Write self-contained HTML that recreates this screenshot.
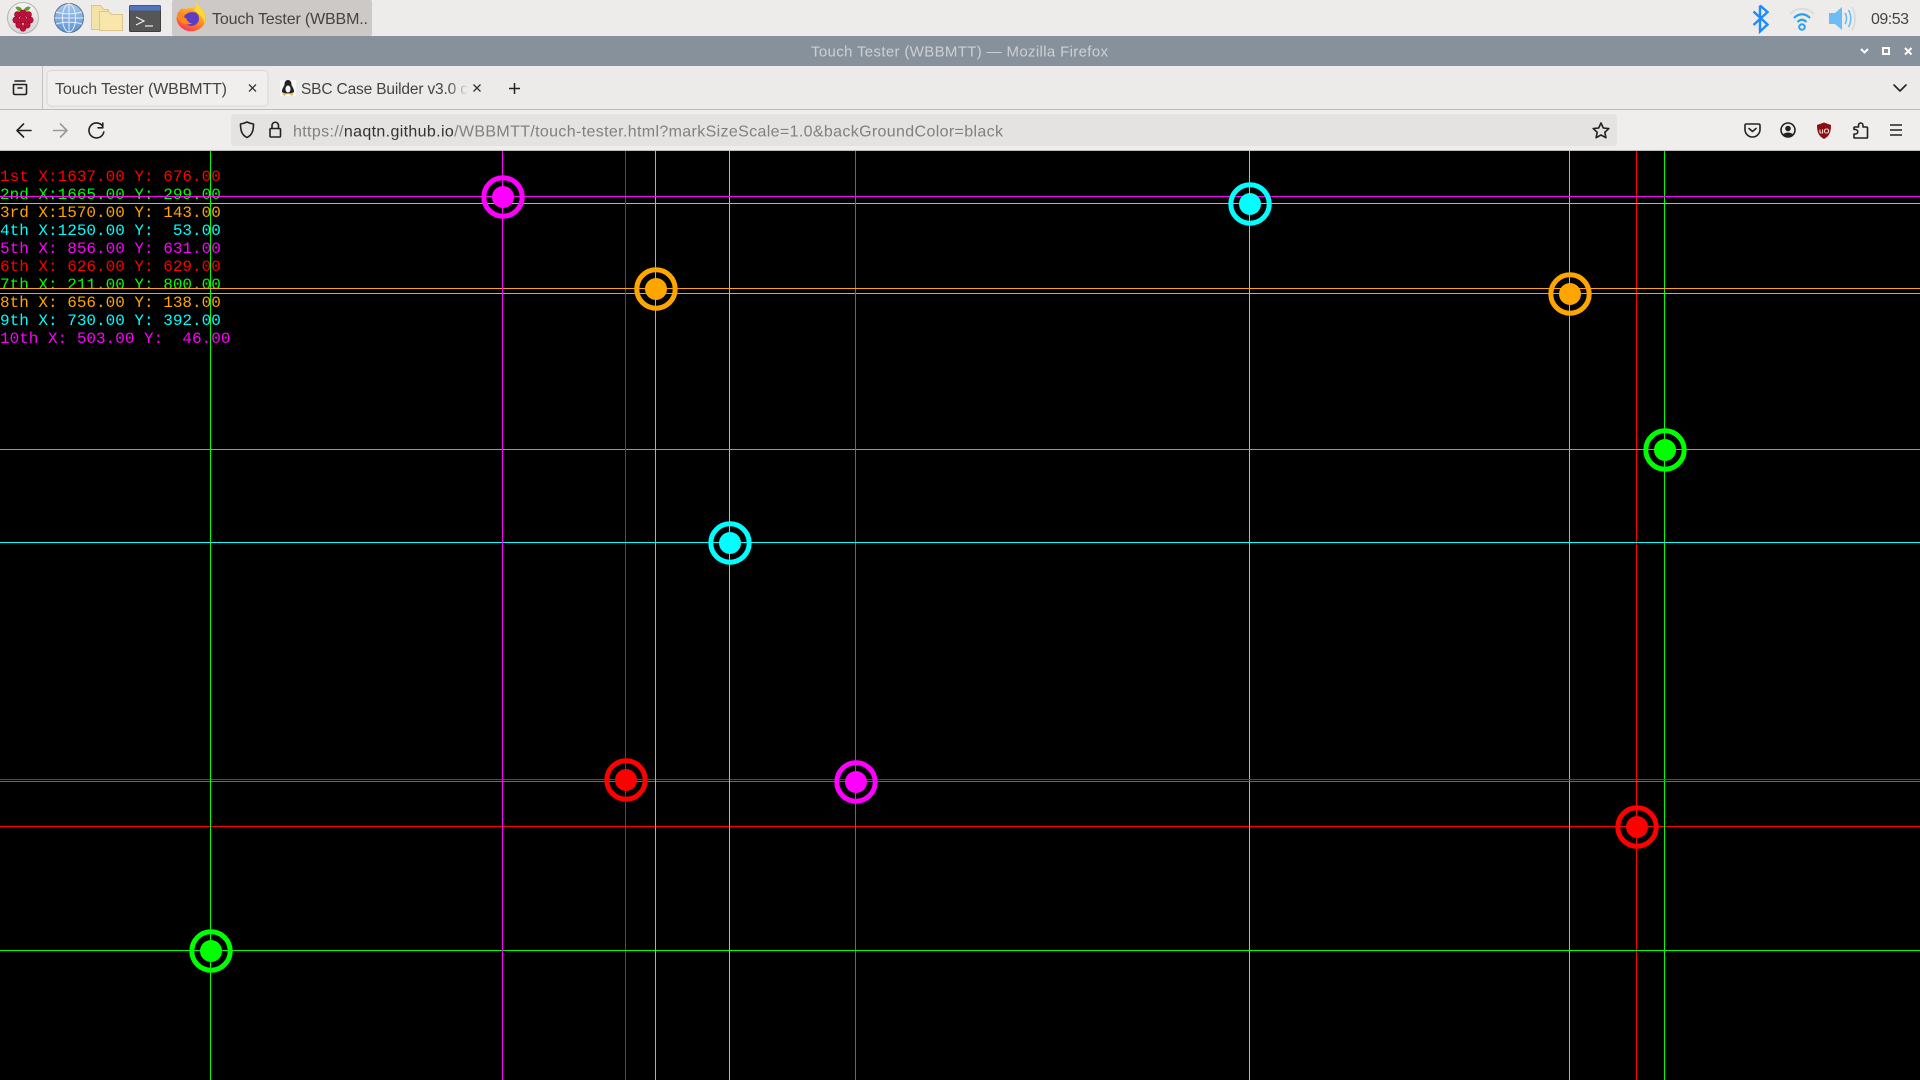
<!DOCTYPE html>
<html><head><meta charset="utf-8"><title>Touch Tester (WBBMTT)</title>
<style>html,body{margin:0;padding:0;background:#000;width:1920px;height:1080px;overflow:hidden}svg{display:block}
text{font-family:"Liberation Sans",sans-serif;font-size:16px;fill:#444;white-space:pre}
.m{font-family:"Liberation Mono",monospace;font-size:16px}
.ic{fill:none;stroke:#222;stroke-width:1.6;stroke-linecap:round;stroke-linejoin:round}
</style></head><body>
<svg width="1920" height="1080" viewBox="0 0 1920 1080" xmlns="http://www.w3.org/2000/svg">
<defs>
<linearGradient id="ffo" x1=".85" y1="0" x2=".35" y2="1"><stop offset="0" stop-color="#ffe03e"/><stop offset=".5" stop-color="#ff9a1f"/><stop offset=".85" stop-color="#ff5a3a"/><stop offset="1" stop-color="#f5356a"/></linearGradient>
<linearGradient id="fad" x1="0" x2="1"><stop offset="0" stop-color="#444"/><stop offset=".88" stop-color="#444"/><stop offset="1" stop-color="#ecebe9"/></linearGradient>
<linearGradient id="glb" x1="0" y1="0" x2="0" y2="1"><stop offset="0" stop-color="#a9c8ec"/><stop offset="1" stop-color="#5d93d3"/></linearGradient>
<linearGradient id="rp" x1="0" y1="0" x2="0" y2="1"><stop offset="0" stop-color="#f6f6f6"/><stop offset="1" stop-color="#d2d2d2"/></linearGradient>
</defs>
<rect width="1920" height="1080" fill="#000"/>
<!-- panel -->
<rect width="1920" height="36" fill="#edecea"/>
<circle cx="23" cy="18" r="15.5" fill="url(#rp)" stroke="#b5b5b5"/>
<path d="M22.500 12c-3-.5-6-1.500-7-5 3-1 6 0 7 4zM23.500 12c3-.5 6-1.500 7-5-3-1-6 0-7 4z" fill="#5e9e30"/>
<g fill="#c20f3a" stroke="#8d0a28" stroke-width=".6"><circle cx="23" cy="13.500" r="3.500"/><circle cx="17.500" cy="14.500" r="3"/><circle cx="28.500" cy="14.500" r="3"/><circle cx="16" cy="20" r="3.200"/><circle cx="23" cy="19.500" r="3.500"/><circle cx="30" cy="20" r="3.200"/><circle cx="19" cy="25" r="3.200"/><circle cx="27" cy="25" r="3.200"/><circle cx="23" cy="28.500" r="2.800"/></g>
<circle cx="69" cy="18" r="14.500" fill="url(#glb)" stroke="#5a7390"/>
<g fill="none" stroke="#e4eefa" stroke-width="1"><ellipse cx="69" cy="18" rx="6.500" ry="14"/><path d="M69 4v28M56 12c8 2.500 18 2.500 26 0M56 24c8-2.500 18-2.500 26 0M54.500 18h29"/></g>
<path d="M91.500 5.500h9l3 4h5v20h-17z" fill="#f4e3a6" stroke="#d9c68c"/>
<path d="M99.500 11.500h9l3 3h11v16h-23z" fill="#f8e6aa" stroke="#d9c68c"/>
<rect x="129.500" y="5.500" width="31" height="26" rx="1" fill="#565656" stroke="#3e3e3e"/>
<rect x="129.500" y="5.500" width="31" height="5" fill="#4f74c0"/>
<path d="M136 17l8 4-8 4" fill="none" stroke="#f0f0f0" stroke-width="1.200"/><path d="M145 26h8" stroke="#f0f0f0" stroke-width="1.200"/>
<rect x="172" y="0" width="200" height="36" rx="2" fill="#cdc9c6"/>
<path d="M180.500 9c-3 4-4 8-4 10.500a15 14.500 0 0 0 29.500 0c0-4-1.500-8-4.500-11-1.500-1.800-3.500-3.500-5-6.500 0 3-1 5-3 6.500-2-1-5-1-7 .5-1.500-.5-4-.5-6 0z" fill="url(#ffo)"/>
<path d="M196.500 2c1.500 4 5 6.500 7 10 2 3.500 2.500 8 1 11.500-1-5-4-8.500-7-10.500-2-1.300-4-1.500-5.500-1 3-2 5-5 4.500-10z" fill="#ffd93a"/>
<circle cx="191.500" cy="18.500" r="7.500" fill="#5b3cc4"/>
<path d="M177.500 12c1 4 4 5.500 8.500 6 1 3 3 5 6 5.500-5 2-11 0-13.500-4-1.500-2.500-1.500-5-1-7.500z" fill="#ff8a1c"/>
<path d="M183.500 13c3-3.500 10.500-4 13.500 0-4-1.500-9-1-11 1.500z" fill="#ff9a1f"/>
<text x="212" y="24" textLength="156" lengthAdjust="spacing" fill="#333">Touch Tester (WBBM..</text>
<path d="M1760 5.500v26l7.500-7-14-13M1760 5.500l7.500 6.500-14 13" fill="none" stroke="#1a8cff" stroke-width="2.400"/>
<g fill="none"><path d="M1790 14c7-7 17-7 24 0" stroke="#dcdcdc" stroke-width="2"/><path d="M1794 18c5-5 11-5 16 0M1797.500 22c3-3 6-3 9 0" stroke="#2aa2f2" stroke-width="2.200"/><circle cx="1802" cy="27" r="2.800" stroke="#2aa2f2" stroke-width="2"/></g>
<path d="M1829 13h6l7-6v23l-7-6h-6z" fill="#6dbdf5"/>
<path d="M1845 13c2 3 2 8 0 11M1848.500 10c3 5 3 12 0 17" fill="none" stroke="#6dbdf5" stroke-width="1.600"/><path d="M1852 7c4 7 4 16 0 23" fill="none" stroke="#d8d8d8" stroke-width="1.600"/>
<text x="1871" y="24" textLength="38" lengthAdjust="spacing">09:53</text>
<!-- titlebar -->
<rect y="36" width="1920" height="30" fill="#87919b"/>
<text x="811" y="56.500" textLength="297" lengthAdjust="spacing" style="font-size:15px;fill:#ccd0d4">Touch Tester (WBBMTT) — Mozilla Firefox</text>
<path d="M1861 49l3.500 3.500 3.500-3.500" fill="none" stroke="#fff" stroke-width="2"/>
<rect x="1883" y="48" width="6" height="6" fill="none" stroke="#fff" stroke-width="2"/>
<path d="M1905 48l6.500 6.500M1911.500 48l-6.500 6.500" stroke="#fff" stroke-width="2"/>
<!-- tab bar -->
<rect y="66" width="1920" height="43" fill="#ecebe9"/>
<rect y="109" width="1920" height="1" fill="#bdbcba"/>
<rect x="42" y="66" width="1" height="43" fill="#c4c3c1"/>
<path class="ic" d="M13.500 84.500h13v8.500q0 1.500-1.500 1.500h-10q-1.500 0-1.500-1.500zM15 81h10M18 88h4"/>
<rect x="47" y="70.500" width="221" height="35.500" rx="4" fill="#f0efee" stroke="#d8d7d5"/>
<text x="55" y="94" textLength="172" lengthAdjust="spacing">Touch Tester (WBBMTT)</text>
<path d="M249 84.500l7 7M256 84.500l-7 7" stroke="#333" stroke-width="1.300"/>
<g><rect x="280" y="80" width="16" height="16" fill="#f6f6f4"/><path d="M288 80c-3 0-3.500 3-3.500 5-1 2-3 5-2.500 7 2 2 10 2 12 0 .5-2-1.500-5-2.500-7 0-2-.5-5-3.500-5z" fill="#222"/><path d="M285.500 89c0-2 1-3.500 2.500-3.500s2.500 1.500 2.500 3.500-1 3.500-2.500 3.500-2.500-1.500-2.500-3.500z" fill="#f4f4f4"/><path d="M282 93.500h4.500l-2 2.500zM294 93.500h-4.500l2 2.500z" fill="#eeb422"/></g>
<text x="301" y="94" textLength="167" lengthAdjust="spacing" style="font-size:15.500px;fill:url(#fad)">SBC Case Builder v3.0 c</text>
<path d="M473.500 84.500l7 7M480.500 84.500l-7 7" stroke="#333" stroke-width="1.300"/>
<path d="M514.500 83v11M509 88.500h11" stroke="#222" stroke-width="1.500"/>
<path d="M1894 85l6 6 6-6" class="ic"/>
<!-- toolbar -->
<rect y="110" width="1920" height="40" fill="#efeeec"/>
<rect y="150" width="1920" height="1" fill="#bdbcba"/>
<path class="ic" d="M31 130.500H17.500M23.500 124l-6.500 6.500 6.500 6.500"/>
<path class="ic" style="stroke:#999" d="M53.500 130.500H67M60.500 124l6.500 6.500-6.500 6.500"/>
<path class="ic" d="M102.500 126a7.500 7.500 0 1 0 1.300 6M102.800 123v4.800h-4.800"/>
<rect x="231" y="114" width="1386" height="32" rx="4" fill="#e4e3e1"/>
<path class="ic" d="M247 122c-2 1-4.500 1.800-6.500 2 0 6 1 11 6.500 13.500 5.500-2.500 6.500-7.500 6.500-13.500-2-.2-4.500-1-6.500-2z"/>
<rect x="270" y="128.500" width="10.500" height="8.500" rx="1" class="ic"/>
<path class="ic" d="M272 128.500v-3a3.200 3.200 0 0 1 6.500 0v3"/>
<text x="293" y="136.500" textLength="710" lengthAdjust="spacing" style="fill:#808080">https://<tspan style="fill:#333">naqtn.github.io</tspan>/WBBMTT/touch-tester.html?markSizeScale=1.0&amp;backGroundColor=black</text>
<path class="ic" d="M1601 123l2.300 5 5.500.6-4 3.700 1.100 5.400-4.900-2.700-4.900 2.700 1.100-5.400-4-3.700 5.500-.6z"/>
<path class="ic" d="M1746 124h12.500q1.500 0 1.500 1.500v4a7.500 7.500 0 0 1-15 0v-4q0-1.500 1-1.500zM1749 128.500l3.500 3 3.500-3"/>
<circle cx="1788" cy="130" r="7" class="ic"/><circle cx="1788" cy="128.500" r="2.800" fill="#222"/><path d="M1782.500 134.500q5.500-4 11 0l-2 2h-7z" fill="#222"/>
<path d="M1824 122.500l7 2.500c0 6-1 11-7 14-6-3-7-8-7-14z" fill="#8b0f12"/>
<text x="1819" y="133.500" style="font-size:7.500px;fill:#f0d8d8;font-weight:bold">uO</text>
<path class="ic" d="M1860.500 123a2.500 2.500 0 0 1 2.500 2.500v1.500h3.500q1 0 1 1v9.500q0 .5-1 .5h-11.500q-1 0-1-.5v-3.500h1.500a2.200 2.200 0 0 0 0-4.500h-1.500v-2q0-.5 1-.5h3.500v-1.500a2.500 2.500 0 0 1 2-2.500z"/>
<path d="M1890 125h12M1890 130h12M1890 135h12" stroke="#222" stroke-width="1.400"/>
<!-- text -->
<text class="m" xml:space="preserve" x="0" y="181" style="fill:#f00">1st X:1637.00 Y: 676.00</text>
<text class="m" xml:space="preserve" x="0" y="199" style="fill:#0f0">2nd X:1665.00 Y: 299.00</text>
<text class="m" xml:space="preserve" x="0" y="217" style="fill:#ffa500">3rd X:1570.00 Y: 143.00</text>
<text class="m" xml:space="preserve" x="0" y="235" style="fill:#0ff">4th X:1250.00 Y:  53.00</text>
<text class="m" xml:space="preserve" x="0" y="253" style="fill:#f0f">5th X: 856.00 Y: 631.00</text>
<text class="m" xml:space="preserve" x="0" y="271" style="fill:#f00">6th X: 626.00 Y: 629.00</text>
<text class="m" xml:space="preserve" x="0" y="289" style="fill:#0f0">7th X: 211.00 Y: 800.00</text>
<text class="m" xml:space="preserve" x="0" y="307" style="fill:#ffa500">8th X: 656.00 Y: 138.00</text>
<text class="m" xml:space="preserve" x="0" y="325" style="fill:#0ff">9th X: 730.00 Y: 392.00</text>
<text class="m" xml:space="preserve" x="0" y="343" style="fill:#f0f">10th X: 503.00 Y:  46.00</text>
<!-- crosshairs -->
<g shape-rendering="crispEdges" stroke-width="1" fill="none">
<path stroke="#f00" d="M1636.500 151V1080M0 826.500H1920"/>
<path stroke="#0f0" d="M1664.500 151V1080M0 449.500H1920"/>
<path stroke="#ffa500" d="M1569.500 151V1080M0 293.500H1920"/>
<path stroke="#0ff" d="M1249.500 151V1080M0 203.500H1920"/>
<path stroke="#f0f" d="M855.500 151V1080M0 781.500H1920"/>
<path stroke="#f00" d="M625.500 151V1080M0 779.500H1920"/>
<path stroke="#0f0" d="M210.500 151V1080M0 950.500H1920"/>
<path stroke="#ffa500" d="M655.500 151V1080M0 288.500H1920"/>
<path stroke="#0ff" d="M729.500 151V1080M0 542.500H1920"/>
<path stroke="#f0f" d="M502.500 151V1080M0 196.500H1920"/>
</g>
<g fill="none" stroke-width="5">
<circle cx="1637" cy="827" r="19.200" stroke="#f00"/>
<circle cx="1665" cy="450" r="19.200" stroke="#0f0"/>
<circle cx="1570" cy="294" r="19.200" stroke="#ffa500"/>
<circle cx="1250" cy="204" r="19.200" stroke="#0ff"/>
<circle cx="856" cy="782" r="19.200" stroke="#f0f"/>
<circle cx="626" cy="780" r="19.200" stroke="#f00"/>
<circle cx="211" cy="951" r="19.200" stroke="#0f0"/>
<circle cx="656" cy="289" r="19.200" stroke="#ffa500"/>
<circle cx="730" cy="543" r="19.200" stroke="#0ff"/>
<circle cx="503" cy="197" r="19.200" stroke="#f0f"/>
</g>
<circle cx="1637" cy="827" r="11" fill="#f00"/>
<circle cx="1665" cy="450" r="11" fill="#0f0"/>
<circle cx="1570" cy="294" r="11" fill="#ffa500"/>
<circle cx="1250" cy="204" r="11" fill="#0ff"/>
<circle cx="856" cy="782" r="11" fill="#f0f"/>
<circle cx="626" cy="780" r="11" fill="#f00"/>
<circle cx="211" cy="951" r="11" fill="#0f0"/>
<circle cx="656" cy="289" r="11" fill="#ffa500"/>
<circle cx="730" cy="543" r="11" fill="#0ff"/>
<circle cx="503" cy="197" r="11" fill="#f0f"/>
</svg>
</body></html>
